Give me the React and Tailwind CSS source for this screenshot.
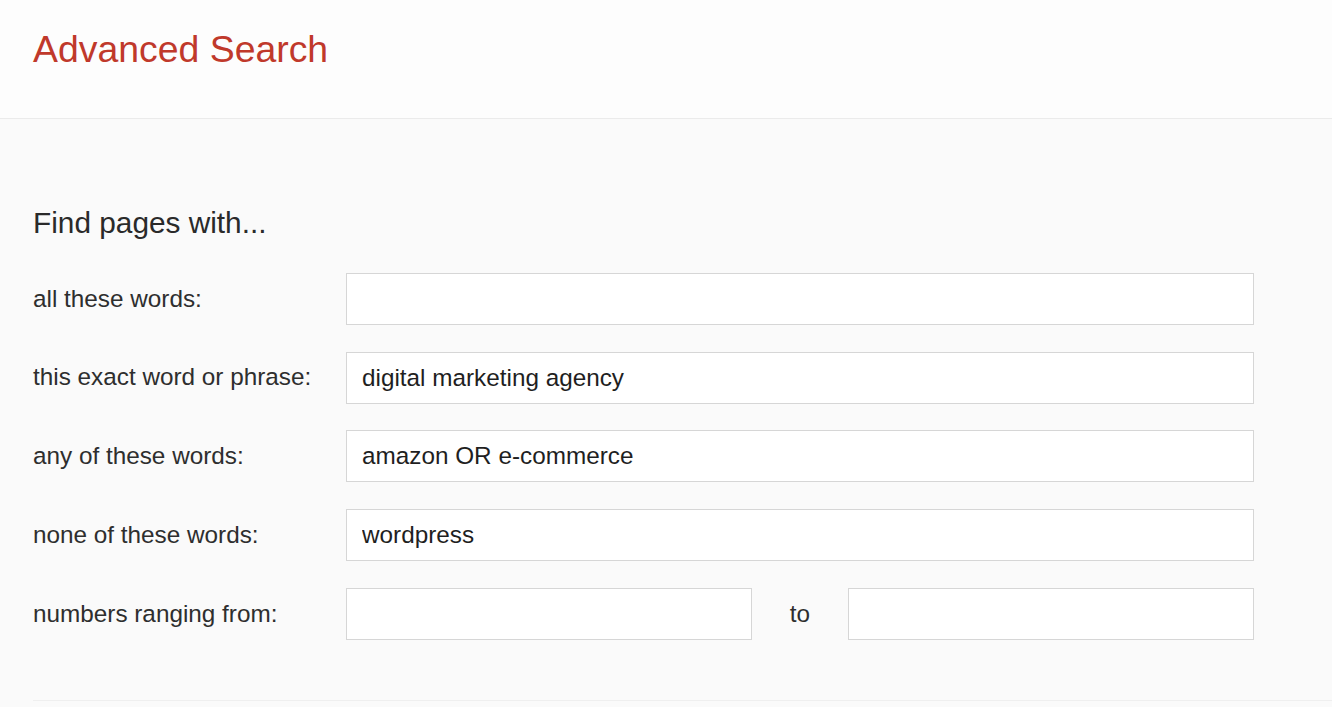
import React from 'react';

const rows = [
  { label: 'all these words:', value: '' },
  { label: 'this exact word or phrase:', value: 'digital marketing agency' },
  { label: 'any of these words:', value: 'amazon OR e-commerce' },
  { label: 'none of these words:', value: 'wordpress' },
];

function Field({ value, className }) {
  return (
    <input
      type="text"
      defaultValue={value}
      className={`h-[52px] bg-white border border-[#d6d6d6] px-[15px] text-[24.3px] text-[#1f1f1f] outline-none ${className}`}
    />
  );
}

export default function App() {
  return (
    <div className="min-h-screen bg-[#fafafa] font-['Liberation_Sans',Arial,sans-serif]">
      <header className="h-[119px] bg-[#fdfdfd] border-b border-[#ebebeb] pl-[33px] pt-[31px]">
        <h1 className="text-[37.4px] leading-none text-[#c0392b]">Advanced Search</h1>
      </header>

      <main className="pl-[33px] pt-[89px]">
        <div className="w-[1221px]">
          <h2 className="text-[29.8px] leading-none text-[#2a2a2a] mb-[35px]">Find pages with...</h2>

          <div className="flex flex-col gap-[26.75px]">
            {rows.map((row) => (
              <div key={row.label} className="flex items-center">
                <label className="w-[313px] text-[24.3px] leading-none text-[#2e2e2e]">{row.label}</label>
                <Field value={row.value} className="flex-1" />
              </div>
            ))}

            <div className="flex items-center">
              <label className="w-[313px] text-[24.3px] leading-none text-[#2e2e2e]">numbers ranging from:</label>
              <Field value="" className="w-[406px]" />
              <span className="w-[96px] text-center text-[24.3px] leading-none text-[#2e2e2e]">to</span>
              <Field value="" className="w-[406px]" />
            </div>
          </div>
        </div>

        <div className="mt-[60px] border-t border-[#efefef]" />
      </main>
    </div>
  );
}
